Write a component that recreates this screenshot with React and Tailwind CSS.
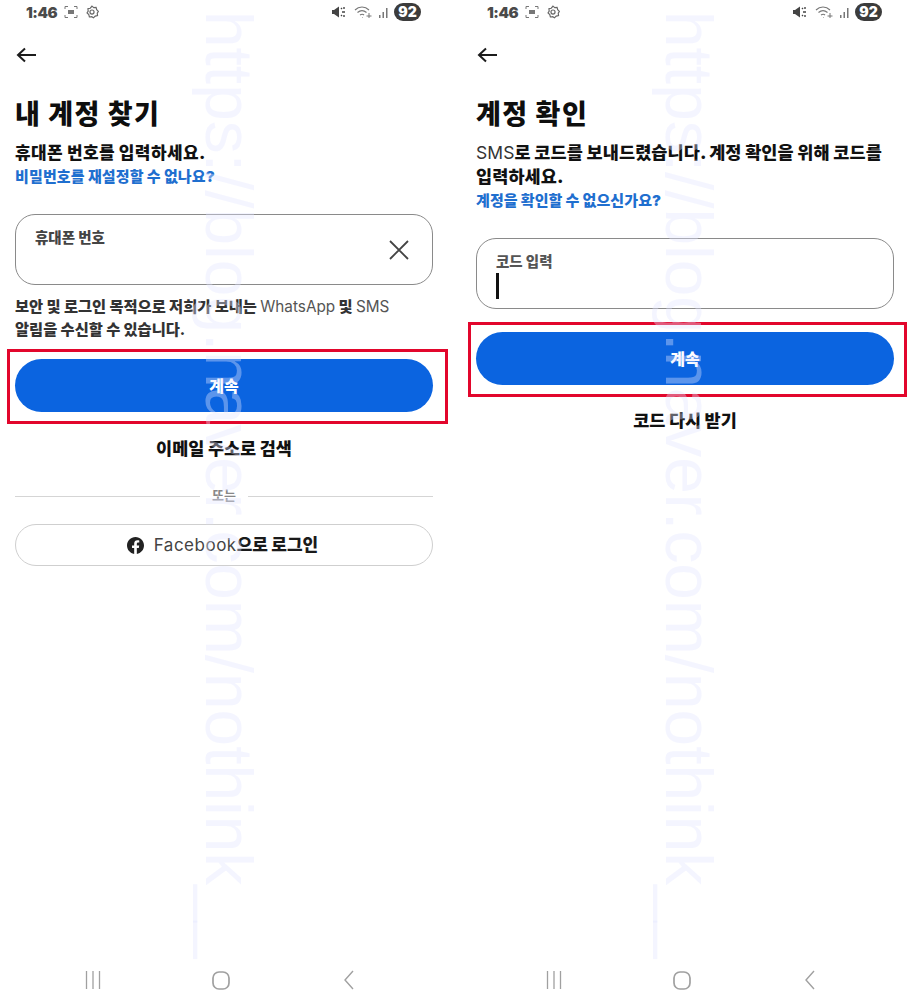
function Status() {
  return (
    <div className="flex items-center justify-between h-[24px] pl-[11px] pr-[12px] text-[#4a4a4a]">
      <div className="flex items-center gap-[7px]">
        <span className="text-[15px] font-black leading-none tracking-[-0.5px]">1:46</span>
        <svg width="14" height="14" viewBox="0 0 14 14" fill="none" stroke="#777" strokeWidth="1">
          <path d="M1 4V1.500H4M10 1.500H13V4M13 10V12.500H10M4 12.500H1V10" />
          <rect x="4" y="5" width="6" height="4" fill="#777" stroke="none" />
        </svg>
        <svg width="14" height="14" viewBox="0 0 24 24" fill="none" stroke="#666" strokeWidth="2">
          <circle cx="12" cy="12" r="3.500" />
          <path d="M12 2l3 2.500 4-.5 1 4 3 3-2 3 .5 4-4 1-3 3-3-2-4 .5-1-4-3-3 2-3-.5-4 4-1z" />
        </svg>
      </div>
      <div className="flex items-center gap-[4px]">
        <svg width="14" height="12" viewBox="0 0 14 12" fill="#444">
          <path d="M0 4h2l5-3.500v11L2 8H0z" />
          <path d="M9 2l1 1M12 1v2M10 6h3M9 10l1-1M12 11V9" stroke="#444" strokeWidth="1.400" />
        </svg>
        <svg width="20" height="14" viewBox="0 0 20 14" fill="none" stroke="#777" strokeWidth="1.100" className="ml-[4px]">
          <path d="M1 5c4-4 10-4 14 0M3.500 7.500c3-2.500 6-2.500 9 0M6 10c1.500-1 3-1 4 0" />
          <path d="M8 12.500h.5M15 8v5M17.500 11h-5" strokeWidth="1" />
        </svg>
        <svg width="12" height="12" viewBox="0 0 12 12" fill="#777">
          <rect x="1" y="9" width="1.500" height="3" />
          <rect x="4.500" y="6" width="1.500" height="6" />
          <rect x="8" y="2" width="1.500" height="10" />
        </svg>
        <span className="flex items-center justify-center w-[27px] h-[18px] rounded-full bg-[#3c3c3c] text-white text-[14px] font-black leading-none">92</span>
      </div>
    </div>
  );
}

function Back() {
  return (
    <div className="mt-[19px] h-[24px] flex items-center pl-[1px]">
      <svg width="20" height="16" viewBox="0 0 20 16" fill="none" stroke="#1c1c1c" strokeWidth="2">
        <path d="M20 8H2M9 1.500L2 8l7 6.500" />
      </svg>
    </div>
  );
}

function RedBox({ wide }) {
  return (
    <div className={wide ? "-ml-[8px] w-[441px] h-[75px] border-[3px] border-[#e2062c] pl-[5px] pt-[7px]" : "-ml-[8px] w-[439px] h-[75px] border-[3px] border-[#e2062c] pl-[5px] pt-[7px]"}>
      <button className="w-[418px] h-[53px] rounded-full bg-[#0b64e0] text-white text-[16px] font-black flex items-center justify-center">
        계속
      </button>
    </div>
  );
}

function NavBar() {
  return (
    <div className="mt-auto mb-[9px] h-[20px] flex items-center pl-[68px]">
      <svg width="20" height="20" viewBox="0 0 20 20" fill="none" stroke="#a0a0a0" strokeWidth="1.300">
        <path d="M3.500 1v18M10 1v18M16.500 1v18" />
      </svg>
      <svg width="20" height="20" viewBox="0 0 20 20" fill="none" stroke="#a0a0a0" strokeWidth="1.700" className="ml-[108px]">
        <rect x="2" y="2" width="16" height="17" rx="6" />
      </svg>
      <svg width="14" height="20" viewBox="0 0 14 20" fill="none" stroke="#a0a0a0" strokeWidth="1.400" className="ml-[111px]">
        <path d="M11 1L3 10l8 9" />
      </svg>
    </div>
  );
}

function Left() {
  return (
    <div className="w-[461px] h-[999px] pl-[15px] flex flex-col">
      <div className="w-[418px] flex flex-col flex-1">
        <Status />
        <Back />
        <h1 className="mt-[30px] text-[27px] leading-[36px] font-black text-[#0e0e0e] tracking-[1.500px]">내 계정 찾기</h1>
        <p className="mt-[8px] text-[17px] leading-[24px] font-black text-[#111] tracking-[0.4px]">휴대폰 번호를 입력하세요.</p>
        <a className="mt-0 text-[15px] leading-[24px] font-black text-[#1f6fcf] tracking-[0.15px]">비밀번호를 재설정할 수 없나요?</a>
        <div className="mt-[25px] relative h-[71px] rounded-[20px] border-[1.500px] border-[#8a8a8a] pl-[19px] pt-[13px]">
          <span className="block text-[14.500px] leading-[20px] font-extrabold text-[#444]">휴대폰 번호</span>
          <svg width="20" height="20" viewBox="0 0 20 20" fill="none" stroke="#444" strokeWidth="1.800" className="absolute right-[23px] top-[25px]">
            <path d="M1 1l18 18M19 1L1 19" />
          </svg>
        </div>
        <p className="mt-[10px] text-[15.300px] leading-[23px] font-extrabold text-[#333] whitespace-nowrap">
          보안 및 로그인 목적으로 저희가 보내는 <span className="font-normal text-[#555]">WhatsApp</span> 및 <span className="font-normal text-[#555]">SMS</span>
          <br />알림을 수신할 수 있습니다.
        </p>
        <div className="mt-[8px]">
          <RedBox wide />
        </div>
        <p className="mt-[13px] text-center text-[17.500px] leading-[24px] font-black text-[#111]">이메일 주소로 검색</p>
        <div className="mt-[23px] flex items-center h-[24px]">
          <div className="h-px flex-1 bg-[#d5d5d5]" />
          <span className="w-[48px] text-center text-[13px] font-bold text-[#888]">또는</span>
          <div className="h-px flex-1 bg-[#d5d5d5]" />
        </div>
        <div className="mt-[16px] h-[42px] rounded-full border border-[#cfcfcf] flex items-center justify-center gap-[10px] pr-[3px]">
          <svg width="17" height="17" viewBox="0 0 24 24" fill="#222">
            <path d="M24 12.070C24 5.400 18.630 0 12 0S0 5.400 0 12.070c0 6.030 4.390 11.020 10.130 11.930v-8.440H7.080v-3.490h3.050V9.410c0-3.020 1.790-4.690 4.530-4.690 1.310 0 2.680.240 2.680.240v2.970h-1.510c-1.490 0-1.960.930-1.960 1.880v2.260h3.330l-.530 3.490h-2.800V24C19.610 23.090 24 18.100 24 12.070z" />
          </svg>
          <span className="text-[17px] leading-[20px] font-black text-[#1a1a1a]">
            <span className="font-normal text-[#444] tracking-[0.5px]">Facebook</span>으로 로그인
          </span>
        </div>
        <NavBar />
      </div>
    </div>
  );
}

function Right() {
  return (
    <div className="w-[451px] h-[999px] pl-[15px] flex flex-col">
      <div className="w-[418px] flex flex-col flex-1">
        <Status />
        <Back />
        <h1 className="mt-[30px] text-[27px] leading-[36px] font-black text-[#0e0e0e] tracking-[1.500px]">계정 확인</h1>
        <p className="mt-[8px] text-[17.500px] leading-[24px] font-black text-[#111] whitespace-nowrap tracking-[0.1px]">
          <span className="font-normal text-[#333]">SMS</span>로 코드를 보내드렸습니다. 계정 확인을 위해 코드를
          <br />입력하세요.
        </p>
        <a className="mt-0 text-[15px] leading-[24px] font-black text-[#1f6fcf] tracking-[0.1px]">계정을 확인할 수 없으신가요?</a>
        <div className="mt-[25px] relative h-[71px] rounded-[20px] border-[1.500px] border-[#8a8a8a] pl-[19px] pt-[13px]">
          <span className="block text-[14.500px] leading-[20px] font-extrabold text-[#555]">코드 입력</span>
          <div className="mt-[1px] w-[2.500px] h-[26px] bg-[#111]" />
        </div>
        <div className="mt-[13px]">
          <RedBox />
        </div>
        <p className="mt-[12px] text-center text-[17.500px] leading-[24px] font-black text-[#111]">코드 다시 받기</p>
        <NavBar />
      </div>
    </div>
  );
}

function Watermark({ x }) {
  return (
    <div
      className="absolute top-[11px] pointer-events-none [writing-mode:vertical-rl] whitespace-nowrap text-[65.800px] leading-[65px] text-[rgba(225,228,255,0.38)]"
      style={{ left: x, fontFamily: '"Liberation Sans", sans-serif' }}
    >
      https://blog.naver.com/nothink__
    </div>
  );
}

export default function App() {
  return (
    <div
      className="relative w-[912px] h-[999px] overflow-hidden bg-white flex"
      style={{ fontFamily: '"Inter", "Noto Sans CJK KR", sans-serif' }}
    >
      <Left />
      <Right />
      <Watermark x={196} />
      <Watermark x={656} />
    </div>
  );
}
